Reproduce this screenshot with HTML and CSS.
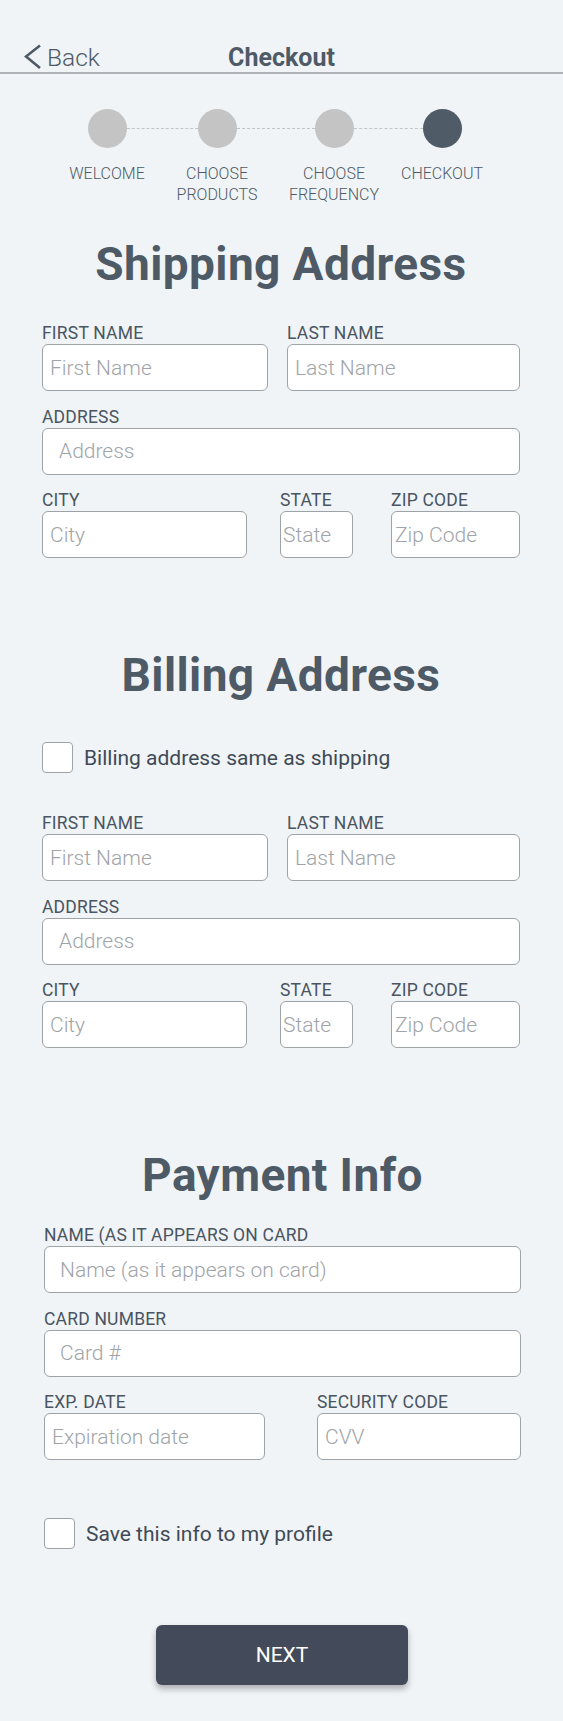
FILE: index.html
```html
<!DOCTYPE html>
<html lang="en">
<head>
<meta charset="utf-8">
<title>Checkout</title>
<link rel="stylesheet" href="styles.css">
</head>
<body>
<header class="topbar">
  <a class="back" href="#">
    <svg class="chev" width="18" height="26" viewBox="0 0 18 26"><polyline points="16,1.5 2,12.5 16,24" fill="none" stroke="#4e5a66" stroke-width="2.6" stroke-linejoin="miter"/></svg>
    <span>Back</span>
  </a>
  <h1 class="title">Checkout</h1>
  <span class="spacer"></span>
</header>

<div class="steps">
  <div class="dots">
    <span class="dot"></span><span class="link l1"></span>
    <span class="dot"></span><span class="link l2"></span>
    <span class="dot"></span><span class="link l3"></span>
    <span class="dot active"></span>
  </div>
  <div class="step-labels">
    <span>WELCOME</span>
    <span>CHOOSE<br>PRODUCTS</span>
    <span>CHOOSE<br>FREQUENCY</span>
    <span>CHECKOUT</span>
  </div>
</div>

<section class="form shipping">
  <h2 class="heading">Shipping Address</h2>
  <div class="row two">
    <label class="field"><span class="lbl">FIRST NAME</span><input class="in p8" placeholder="First Name"></label>
    <label class="field"><span class="lbl">LAST NAME</span><input class="in p8" placeholder="Last Name"></label>
  </div>
  <div class="row">
    <label class="field"><span class="lbl">ADDRESS</span><input class="in p17" placeholder="Address"></label>
  </div>
  <div class="row three">
    <label class="field"><span class="lbl">CITY</span><input class="in p8" placeholder="City"></label>
    <label class="field"><span class="lbl">STATE</span><input class="in p2" placeholder="State"></label>
    <label class="field"><span class="lbl">ZIP CODE</span><input class="in p3" placeholder="Zip Code"></label>
  </div>
</section>

<section class="form billing">
  <h2 class="heading">Billing Address</h2>
  <label class="check"><input type="checkbox" class="box"><span>Billing address same as shipping</span></label>
  <div class="row two">
    <label class="field"><span class="lbl">FIRST NAME</span><input class="in p8" placeholder="First Name"></label>
    <label class="field"><span class="lbl">LAST NAME</span><input class="in p8" placeholder="Last Name"></label>
  </div>
  <div class="row">
    <label class="field"><span class="lbl">ADDRESS</span><input class="in p17" placeholder="Address"></label>
  </div>
  <div class="row three">
    <label class="field"><span class="lbl">CITY</span><input class="in p8" placeholder="City"></label>
    <label class="field"><span class="lbl">STATE</span><input class="in p2" placeholder="State"></label>
    <label class="field"><span class="lbl">ZIP CODE</span><input class="in p3" placeholder="Zip Code"></label>
  </div>
</section>

<section class="form payment">
  <h2 class="heading">Payment Info</h2>
  <div class="row">
    <label class="field"><span class="lbl">NAME (AS IT APPEARS ON CARD</span><input class="in p16" placeholder="Name (as it appears on card)"></label>
  </div>
  <div class="row">
    <label class="field"><span class="lbl">CARD NUMBER</span><input class="in p16" placeholder="Card #"></label>
  </div>
  <div class="row pay">
    <label class="field"><span class="lbl">EXP. DATE</span><input class="in p8" placeholder="Expiration date"></label>
    <label class="field"><span class="lbl">SECURITY CODE</span><input class="in p7" placeholder="CVV"></label>
  </div>
  <label class="check save"><input type="checkbox" class="box"><span>Save this info to my profile</span></label>
</section>

<div class="actions">
  <button class="next" type="button">NEXT</button>
</div>
</body>
</html>
```

FILE: styles.css
```css
* { box-sizing: border-box; }
html, body { margin: 0; padding: 0; }
body {
  background: #f0f4f7;
  font-family: Roboto, "Liberation Sans", sans-serif;
  color: #4e5a66;
  width: 563px;
  min-height: 1721px;
}

.topbar {
  display: grid;
  grid-template-columns: 1fr auto 1fr;
  align-items: end;
  padding-top: 43px;
  height: 74px;
  border-bottom: 2px solid #aeb2b6;
}
.back {
  display: flex;
  align-items: center;
  gap: 5px;
  padding-left: 24px;
  color: #4e5a66;
  text-decoration: none;
  font-size: 24.5px;
  font-weight: 300;
  line-height: 30px;
}
.chev { display: block; margin-top: -2px; }
.title {
  margin: 0;
  font-size: 25px;
  font-weight: 700;
  line-height: 30px;
  color: #4e5a66;
}

.steps { padding-top: 35px; }
.dots {
  display: flex;
  align-items: center;
  padding-left: 88px;
  height: 39px;
}
.dot {
  width: 39px;
  height: 39px;
  border-radius: 50%;
  background: #c4c4c4;
  flex: none;
}
.dot.active { background: #4f5b66; }
.link {
  height: 0;
  border-top: 1px dashed #c4c4c4;
  flex: none;
}
.l1 { width: 71px; }
.l2 { width: 78px; }
.l3 { width: 69px; }
.step-labels {
  display: grid;
  grid-template-columns: 110px 110px 124px 92px;
  padding-left: 52px;
  margin-top: 15px;
  font-size: 16px;
  font-weight: 300;
  line-height: 21px;
  text-align: center;
  color: #4e5a66;
  white-space: nowrap;
}

.form { padding: 0 43px 0 42px; }
.payment { padding: 0 42px 0 44px; }
.heading {
  margin: 0 -40px;
  text-align: center;
  font-size: 46px;
  font-weight: 700;
  letter-spacing: 0.4px;
  line-height: 54px;
  color: #4e5a66;
}
.shipping { margin-top: 32px; }
.shipping .heading { margin-bottom: 32px; }
.billing { margin-top: 90px; }
.billing .heading { margin-bottom: 40px; }
.payment { margin-top: 100px; }
.payment .heading { margin-bottom: 23px; }

.row { display: grid; grid-template-columns: 1fr; margin-bottom: 15.5px; }
.row.two { grid-template-columns: 226px 233px; column-gap: 19px; }
.row.three { grid-template-columns: 205px 73px 129px; column-gap: 33px; }
.row.three .field:last-child { margin-left: 5px; margin-right: -5px; }
.row.pay { grid-template-columns: 221px 204px; column-gap: 52px; }

.field { display: flex; flex-direction: column; }
.lbl {
  font-size: 17.5px;
  letter-spacing: 0.2px;
  line-height: 20px;
  margin-bottom: 1px;
  color: #4a5562;
  white-space: nowrap;
}
.in {
  height: 47px;
  width: 100%;
  border: 1.5px solid #9ea3a8;
  border-radius: 6px;
  background: #fff;
  font-family: Roboto, "Liberation Sans", sans-serif;
  font-size: 21px;
  font-weight: 300;
  color: #4e5a66;
  outline: none;
  margin: 0;
}
.in::placeholder { color: #a0a4a8; opacity: 1; }
.p2 { padding: 0 2px; }
.p3 { padding: 0 3px; }
.p7 { padding: 0 7px; }
.p8 { padding: 0 7px; }
.p16 { padding: 0 15px; }
.p17 { padding: 0 16px; }

.check {
  display: flex;
  align-items: center;
  gap: 11px;
  font-size: 21px;
  color: #3f4a56;
}
.billing .check { margin-bottom: 40px; }
.save { margin-top: 58px; }
.box {
  appearance: none;
  -webkit-appearance: none;
  width: 31px;
  height: 31px;
  margin: 0;
  border: 1.5px solid #9ea3a8;
  border-radius: 4px;
  background: #fff;
  flex: none;
}

.actions {
  display: flex;
  justify-content: center;
  padding-top: 76px;
  padding-left: 1px;
}
.next {
  width: 252px;
  height: 60px;
  border: none;
  border-radius: 6px;
  background: #434b5a;
  color: #fff;
  font-family: Roboto, "Liberation Sans", sans-serif;
  font-size: 21px;
  font-weight: 400;
  box-shadow: 0 4px 6px rgba(0,0,0,0.28);
}
```
